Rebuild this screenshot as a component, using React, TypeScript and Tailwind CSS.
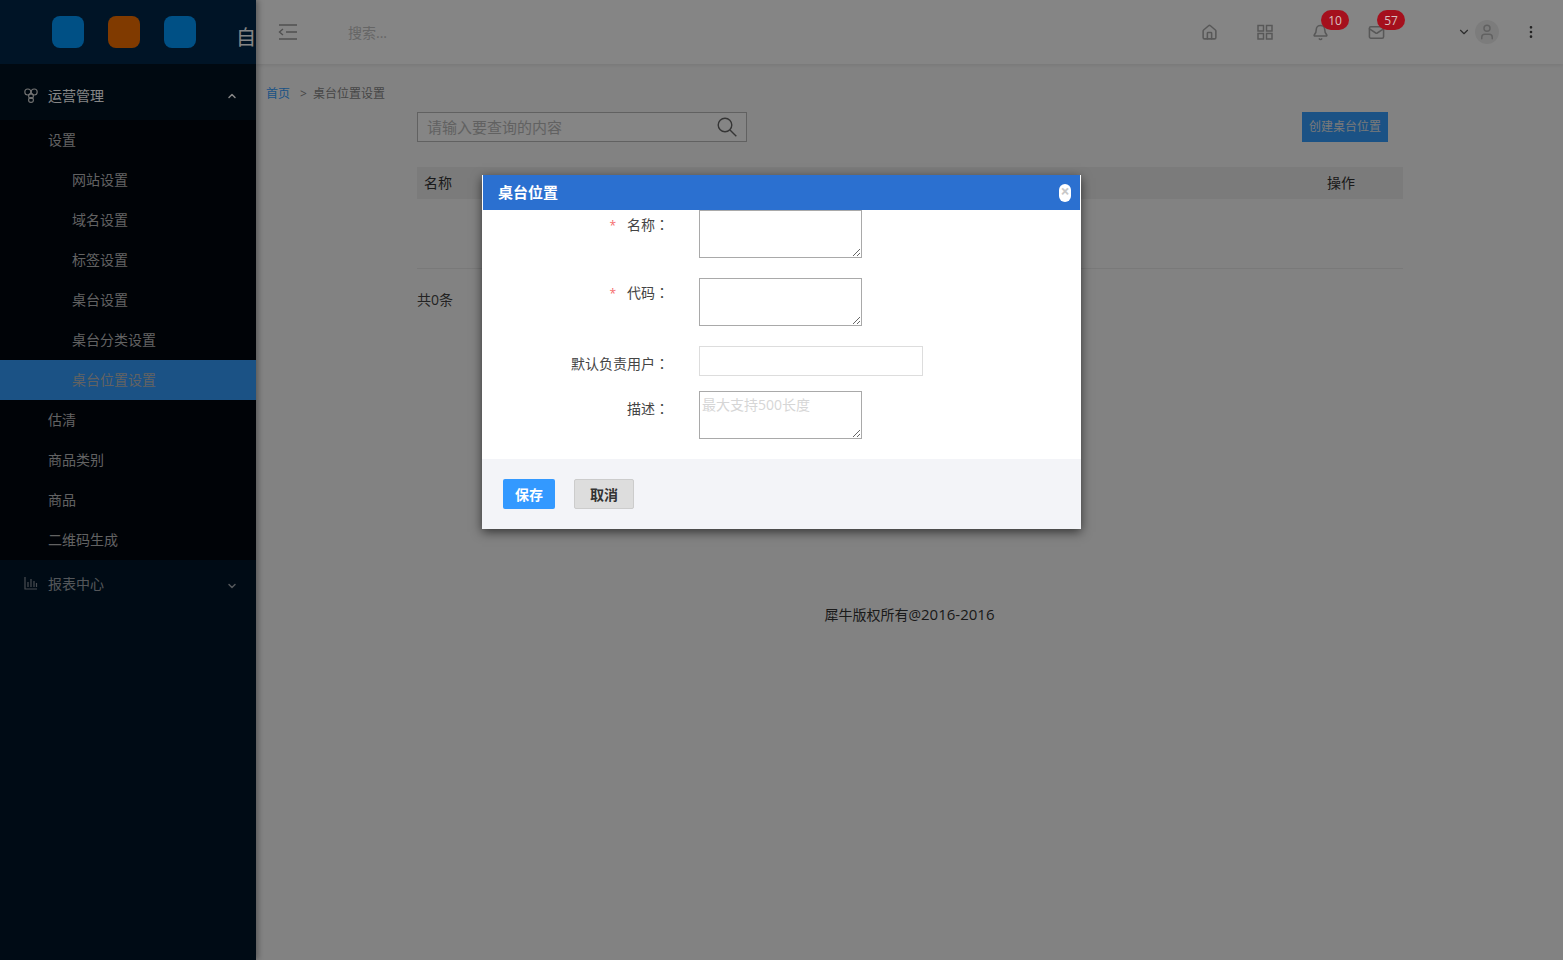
import { Bell, ChevronDown, ChevronUp, Home, Mail, MoreVertical, User } from "lucide-react";

const subItems = ["网站设置", "域名设置", "标签设置", "桌台设置", "桌台分类设置"];
const otherItems = ["估清", "商品类别", "商品", "二维码生成"];

const Sidebar = () => (
  <aside className="w-[256px] shrink-0 h-full bg-[#00162a] overflow-hidden shadow-[2px_0_6px_rgba(0,0,0,0.35)] z-10">
    {/* Logo bar */}
    <div className="h-[64px] bg-[#002849] flex items-center pl-[52px] gap-[24px] whitespace-nowrap">
      <div className="w-[32px] h-[32px] shrink-0 rounded-lg bg-[#0099ff]" />
      <div className="w-[32px] h-[32px] shrink-0 rounded-lg bg-[#f57000]" />
      <div className="w-[32px] h-[32px] shrink-0 rounded-lg bg-[#0099ff]" />
      <span className="text-[20px] leading-none text-white mt-[12px] ml-[16px]">自</span>
    </div>
    <div className="h-[56px] pt-[6px] bg-[#001221] flex items-center pl-[24px] pr-[18px] text-[14px] text-white">
      <svg className="w-[14px] h-[15px] mr-[10px]" viewBox="0 0 14 15" fill="none" stroke="#dddddd" strokeWidth="1.1">
        <circle cx="3.8" cy="4" r="3" />
        <circle cx="10.2" cy="4" r="3" />
        <circle cx="7" cy="8" r="2.4" />
        <circle cx="7" cy="12" r="2.4" />
      </svg>
      <span className="flex-1">运营管理</span>
      <ChevronUp className="w-[12px] h-[12px] mt-[2px]" strokeWidth={3} />
    </div>
    <ul className="bg-[#00060f] text-[14px] text-[#bdbdbd]">
      <li className="h-[40px] leading-[39px] pl-[48px]">设置</li>
      {subItems.map((item) => (
        <li key={item} className="h-[40px] leading-[39px] pl-[72px]">
          {item}
        </li>
      ))}
      <li className="h-[40px] leading-[39px] pl-[72px] bg-[#349eff]">桌台位置设置</li>
      {otherItems.map((item) => (
        <li key={item} className="h-[40px] leading-[39px] pl-[48px]">
          {item}
        </li>
      ))}
    </ul>
    <div className="h-[48px] flex items-center pb-[2px] pl-[24px] pr-[18px] text-[14px] text-[#a0a6ac]">
      <svg className="w-[14px] h-[14px] mr-[10px]" viewBox="0 0 14 14" fill="none" stroke="#8a929a" strokeWidth="1.2">
        <path d="M1 1v12h12M4 11V6M7 11V3M10 11V5M12.5 11V7" />
      </svg>
      <span className="flex-1">报表中心</span>
      <ChevronDown className="w-[12px] h-[12px] mt-[6px]" strokeWidth={3} />
    </div>
  </aside>
);

const Topbar = () => (
  <header className="h-[64px] bg-white shadow-[0_1px_4px_rgba(0,0,0,0.1)] flex items-center">
    <svg className="ml-[22px] w-[20px] h-[16px]" viewBox="0 0 20 16" fill="none" stroke="#999" strokeWidth="1.4">
      <path d="M1 1h18M8 8h11M1 15h18M5 5L1.5 8 5 11" />
    </svg>
    <span className="ml-[50px] text-[14px] text-[#c4c4c4]">搜索...</span>
    <div className="ml-auto flex items-center text-[#aaa]">
      <Home className="w-[17px] h-[17px]" strokeWidth={2.2} />
      <svg className="w-[16px] h-[16px] ml-[39px]" viewBox="0 0 16 16" fill="none" stroke="#aaaaaa" strokeWidth="1.5">
        <rect x="1" y="1.5" width="5.5" height="5.5" />
        <rect x="9.5" y="1.5" width="5.5" height="5.5" />
        <rect x="1" y="9.5" width="5.5" height="5.5" />
        <rect x="9.5" y="9.5" width="5.5" height="5.5" />
      </svg>
      <Bell className="w-[17px] h-[17px] ml-[39px]" strokeWidth={2.2} />
      <Mail className="w-[17px] h-[17px] ml-[39px]" strokeWidth={2.2} />
      <ChevronDown className="w-[14px] h-[14px] ml-[72px] text-[#555]" strokeWidth={2} />
      <div className="ml-[4px] w-[24px] h-[24px] rounded-full bg-[#eeeeee] flex items-center justify-center">
        <User className="w-[18px] h-[18px] text-[#bbb]" />
      </div>
      <MoreVertical className="w-[16px] h-[16px] ml-[24px] mr-[24px] text-[#444]" />
    </div>
  </header>
);

const Page = () => (
  <main className="flex-1 min-w-0 bg-[#fafafa]">
    <Topbar />
    <div className="h-[60px] pl-[10px] flex items-center text-[12px] text-[#888]">
      <span className="text-[#349eff]">首页</span>
      <span className="ml-[10px] mr-[6px]">&gt;</span>
      <span>桌台位置设置</span>
    </div>
    <div className="pl-[161px] pr-[160px]">
      <div className="flex justify-between pr-[15px] mt-[-12px]">
        <div className="w-[330px] h-[30px] border border-[#bbb] bg-white flex items-center pl-[9px] pr-[9px]">
          <span className="flex-1 text-[15px] text-[#bbb]">请输入要查询的内容</span>
          <svg className="w-[20px] h-[20px]" viewBox="0 0 20 20" fill="none" stroke="#666666" strokeWidth="1.4">
            <circle cx="8" cy="8" r="6.8" />
            <path d="M13 13l6.3 6.3" />
          </svg>
        </div>
        <button className="w-[86px] h-[30px] bg-[#349eff] text-[12px] text-[#e8e8e8]">创建桌台位置</button>
      </div>
      <div className="mt-[25px] h-[32px] pb-[2px] bg-[#ebebeb] flex items-center justify-between text-[14px] text-[#333] pl-[7px] pr-[48px]">
        <span>名称</span>
        <span>操作</span>
      </div>
      <div className="h-[70px] border-b border-[#e8e8e8]" />
      <p className="mt-[20px] text-[14px] text-[#444]">共0条</p>
    </div>
    <p className="mt-[293px] text-center text-[14px] text-[#333]">
      犀牛版权所有@<span className="text-[15px]">2016-2016</span>
    </p>
  </main>
);

const FormRow = ({ label, required, children, rowClass }: { label: string; required?: boolean; children: React.ReactNode; rowClass: string }) => (
  <div className={`flex ${rowClass}`}>
    <label className="w-[186px] text-right text-[14px] leading-[20px] text-[#444]">
      {required && <span className="text-[#f56c6c] text-[12px] mr-[11px]">*</span>}
      {label}
      <span className="font-['Noto_Sans_CJK_TC',sans-serif]">：</span>
    </label>
    <div className="ml-[30px]">{children}</div>
  </div>
);

const Modal = () => (
  <div className="absolute left-[482px] top-[175px] w-[599px] bg-white z-30 shadow-[0_3px_10px_rgba(0,0,0,0.6)]">
    <div className="h-[35px] mx-[1px] bg-[#2b70d0] flex items-center justify-between pl-[15px] pr-[9px] text-[15px] font-bold text-white">
      <span className="mt-[-1px]">桌台位置</span>
      <span className="w-[12px] h-[18px] rounded-full bg-white text-[#c8c8c8] text-[16px] leading-[14px] text-center">×</span>
    </div>
    <div className="pl-[1px]">
      <FormRow label="名称" required rowClass="mb-[20px] [&>label]:pt-[4px]">
        <textarea className="block w-[163px] h-[48px] border border-[#a9a9a9] outline-none" />
      </FormRow>
      <FormRow label="代码" required rowClass="mb-[20px] [&>label]:pt-[4px]">
        <textarea className="block w-[163px] h-[48px] border border-[#a9a9a9] outline-none" />
      </FormRow>
      <FormRow label="默认负责用户" rowClass="mb-[15px] [&>label]:pt-[7px]">
        <input className="block w-[224px] h-[30px] border border-[#ddd] outline-none" />
      </FormRow>
      <FormRow label="描述" rowClass="pb-[20px] [&>label]:pt-[7px]">
        <textarea
          placeholder="最大支持500长度"
          className="block w-[163px] h-[48px] border border-[#a9a9a9] outline-none text-[14px] leading-[18px] pl-[2px] pt-[4px] placeholder:text-[#d6d6d6]"
        />
      </FormRow>
    </div>
    <div className="h-[70px] bg-[#f3f4f8] flex items-center pl-[21px] gap-[19px] text-[14px] font-bold">
      <button className="w-[52px] h-[30px] rounded-[2px] bg-[#3399ff] text-white">保存</button>
      <button className="w-[60px] h-[30px] rounded-[2px] bg-[#dddddd] border border-[#cccccc] text-[#333]">取消</button>
    </div>
  </div>
);

const App = () => {
  return (
    <div className="relative flex h-[960px] overflow-hidden font-['Open_Sans','Noto_Sans_CJK_SC',sans-serif]">
      <Sidebar />
      <Page />
      <div className="absolute inset-0 bg-black/48 z-20" />
      <span className="absolute left-[1321px] top-[10px] w-[28px] h-[20px] rounded-full bg-[#a5101d] text-[#d8c0c0] text-[12px] leading-[21px] text-center z-30">10</span>
      <span className="absolute left-[1377px] top-[10px] w-[28px] h-[20px] rounded-full bg-[#a5101d] text-[#d8c0c0] text-[12px] leading-[21px] text-center z-30">57</span>
      <Modal />
    </div>
  );
};

export default App;
